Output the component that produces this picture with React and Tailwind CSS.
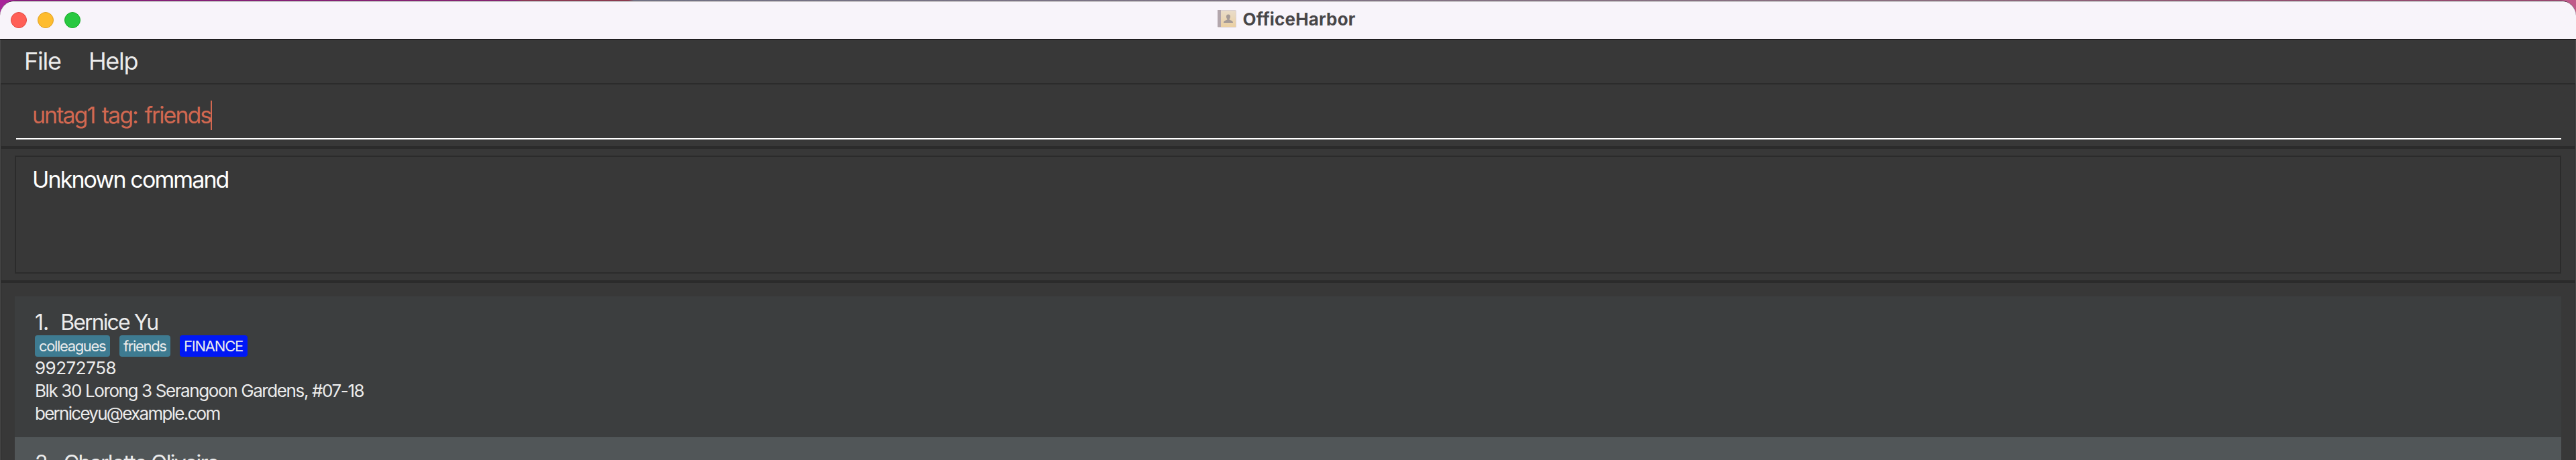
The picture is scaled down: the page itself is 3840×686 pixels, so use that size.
const tagBase = "flex h-8 items-center rounded px-[6px] text-[22px] leading-none text-[#ececec] whitespace-nowrap";

function TitleBar() {
  return (
    <div className="h-[59px] shrink-0 bg-[linear-gradient(90deg,#a8259a_0%,#a82c8e_20%,#b04a68_20.3%,#b04a60_24.4%,#8e93a6_24.6%,#a296a8_50%,#b08ea0_75%,#b8688c_88%,#c05a8a_100%)] pt-px">
      <div className="h-[58px] rounded-t-[22px] border-t border-b border-t-[#1a0a18] border-b-[#0f0d10] bg-[#f8f4fa]">
        <div className="relative flex h-full items-center justify-center rounded-t-[21px] border-t border-white pr-[6px] pb-1">
          <div className="absolute left-4 top-[15px] flex gap-4">
            <span className="size-6 rounded-full border border-[#e2463f] bg-[#ff5f57]" />
            <span className="size-6 rounded-full border border-[#e0a023] bg-[#febc2e]" />
            <span className="size-6 rounded-full border border-[#1aab29] bg-[#28c840]" />
          </div>
          <svg className="mb-[2px] mr-[9px] block" width="30" height="30" viewBox="0 0 30 30">
            <defs>
              <linearGradient id="cover" x1="0" y1="0" x2="0" y2="1">
                <stop offset="0" stopColor="#e9dcc9" />
                <stop offset="1" stopColor="#ebd0a2" />
              </linearGradient>
            </defs>
            <rect x="1" y="2" width="28" height="26" rx="1.5" fill="#d9cfd0" />
            <rect x="1" y="2" width="5" height="25" fill="#b3a6ac" />
            <rect x="6" y="3" width="22" height="24" fill="url(#cover)" />
            <path d="M17 8.500c-2.200 0-3.200 1.600-3 3.800.1 1.400.7 2.300 1.300 3v1.300c-1.500 1-5.300 1-5.300 4.400h14c0-3.400-3.800-3.400-5.300-4.400v-1.300c.6-.7 1.200-1.600 1.300-3 .2-2.200-.8-3.800-3-3.800z" fill="#a59a96" />
          </svg>
          <span className="text-[26px] font-bold leading-none tracking-[0.15px] text-[#484648]">OfficeHarbor</span>
        </div>
      </div>
    </div>
  );
}

function Tag({ label, className }) {
  return <span className={`${tagBase} ${className}`}>{label}</span>;
}

export default function App() {
  return (
    <div className="flex h-[686px] w-[3840px] flex-col overflow-hidden bg-[#383838] font-['Inter',sans-serif]">
      <TitleBar />
      <div className="flex grow flex-col border-x border-[#4a4a4a]">
        <nav className="flex h-[65px] shrink-0 items-center gap-[41px] pb-[2px] pl-[35px] text-[36px] leading-none text-[#ebebeb]">
          <span className="tracking-[-1.2px]">File</span>
          <span className="tracking-[-1.3px]">Help</span>
        </nav>
        <main className="flex grow flex-col border-x border-t-2 border-[#2b2b2b]">
          <section className="h-[96px] shrink-0 border-b-4 border-[#2b2b2b] px-[21px]">
            <div className="ml-px mr-[-1px] flex h-[82px] items-start border-b-2 border-white pl-6 pt-6 text-[34px] leading-[44px] text-[#d26851]">
              <span className="tracking-[-2px] [word-spacing:3px]">untag1 tag: friends</span>
              <span className="h-11 w-[2px] bg-[#d26851]" />
            </div>
          </section>
          <section className="h-[200px] shrink-0 border-b-4 border-[#2b2b2b] px-5 pt-[10px]">
            <div className="h-[176px] border-2 border-[#2b2b2b] pl-6 pt-3 text-[34px] leading-[44px] tracking-[-1.88px] text-white">
              Unknown command
            </div>
          </section>
          <section className="grow px-5 pt-5">
            <article className="flex h-[210px] flex-col bg-[#3c3e3f] pl-[30px] pt-5 text-[26px] leading-[34px] text-[#ececec]">
              <h2 className="flex h-[38px] items-center gap-[18px] text-[32px]">
                <span className="tracking-[-1px]">1.</span>
                <span className="tracking-[-1.9px]">Bernice Yu</span>
              </h2>
              <div className="flex gap-[14px]">
                <Tag label="colleagues" className="w-[112px] tracking-[-1.35px] bg-[#3e7b91]" />
                <Tag label="friends" className="w-[76px] tracking-[-1.35px] bg-[#3e7b91]" />
                <Tag label="FINANCE" className="w-[101px] tracking-[-1.2px] bg-[#0018f5]" />
              </div>
              <p className="tracking-[-0.5px]">99272758</p>
              <p className="tracking-[-1.39px]">Blk 30 Lorong 3 Serangoon Gardens, #07-18</p>
              <p className="tracking-[-1.73px]">berniceyu@example.com</p>
            </article>
            <article className="h-[34px] overflow-hidden bg-[#515658] pl-[30px] pt-5 text-[#ececec]">
              <h2 className="flex h-[38px] items-center gap-4 text-[32px]">
                <span className="tracking-[-1px]">2.</span>
                <span className="tracking-[-1.7px]">Charlotte Oliveiro</span>
              </h2>
            </article>
          </section>
        </main>
      </div>
    </div>
  );
}
